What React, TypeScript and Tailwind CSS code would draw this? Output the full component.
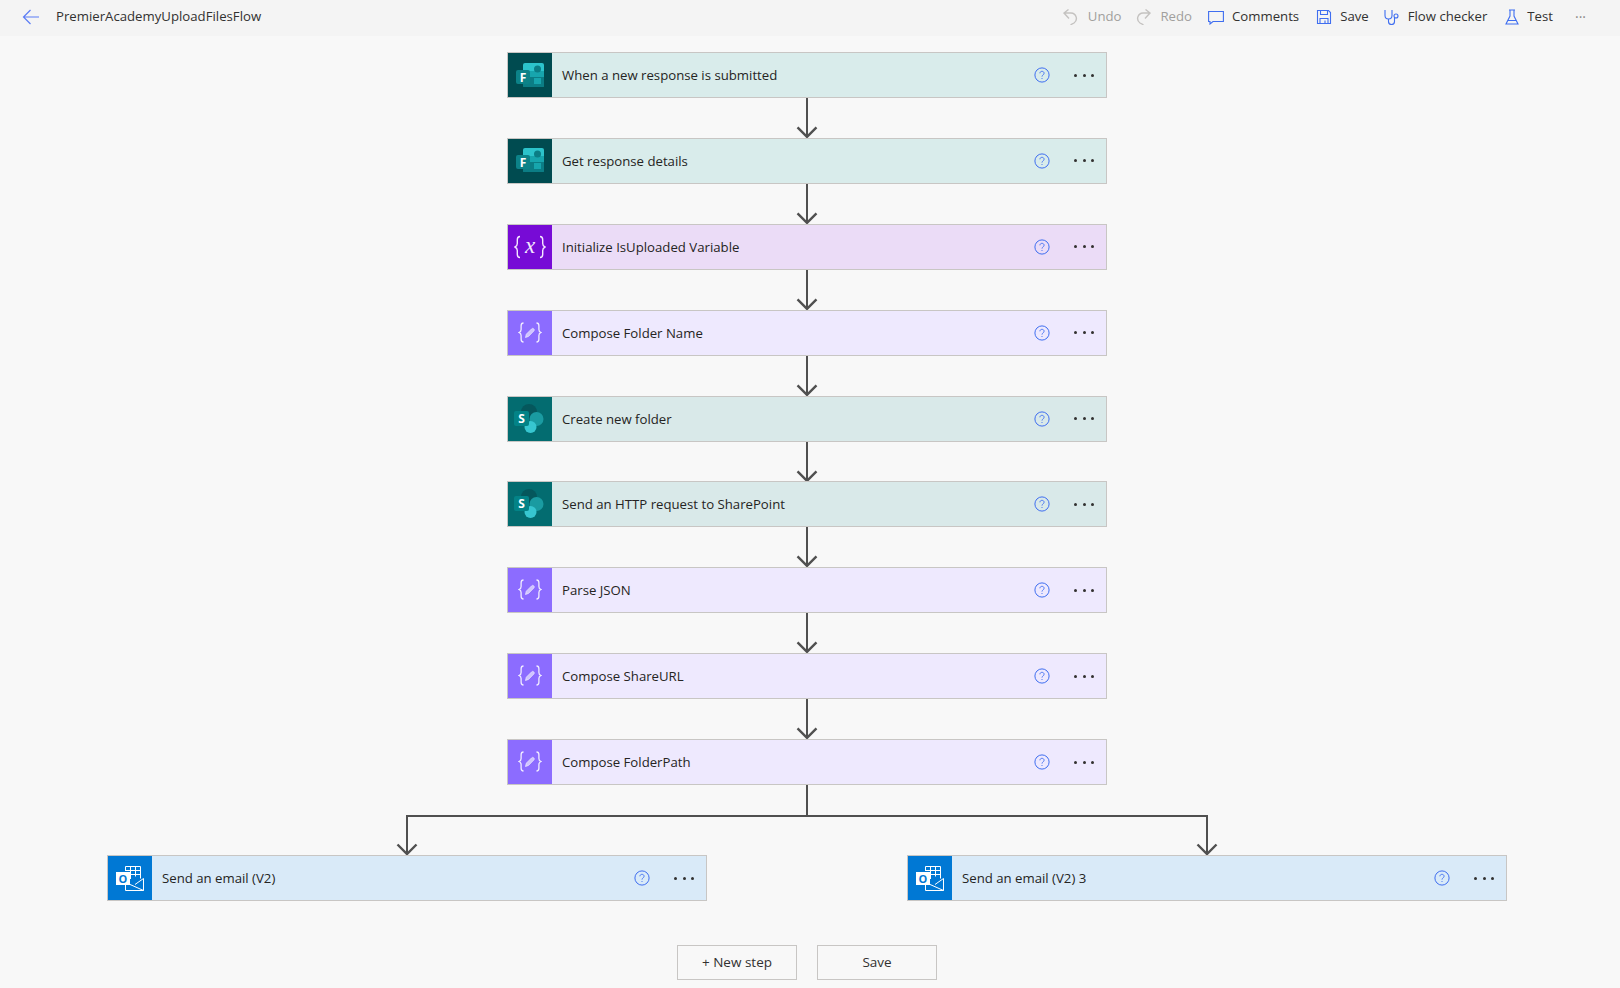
import type { ReactNode } from 'react';

const BLUE = '#3f6ef0';

const FormsIcon = () => (
  <svg width="28" height="25" viewBox="0 0 28 25">
    <rect x="7" y="0" width="21" height="24" rx="2" fill="#2cc3cb" />
    <rect x="7" y="13" width="21" height="11" rx="1" fill="#0b7d85" />
    <rect x="7" y="8" width="21" height="6" fill="#17a5ad" />
    <circle cx="21.500" cy="6" r="3.500" fill="#0b7d85" />
    <rect x="18" y="15" width="7" height="6" fill="#17a5ad" />
    <rect x="0" y="7" width="14" height="14" rx="2" fill="#0c8288" />
    <text x="7" y="18.500" textAnchor="middle" fontSize="12" fontWeight="700" fill="#fff" fontFamily="Open Sans, sans-serif">F</text>
  </svg>
);

const SharePointIcon = () => (
  <svg width="32" height="32" viewBox="0 0 32 32">
    <circle cx="15" cy="9" r="8" fill="#05575c" />
    <circle cx="22.500" cy="16" r="7" fill="#1a9ba1" />
    <circle cx="16.500" cy="24" r="6" fill="#37c6d0" />
    <rect x="0" y="8" width="15" height="15" rx="2" fill="#038387" />
    <text x="7.500" y="20" textAnchor="middle" fontSize="12" fontWeight="700" fill="#fff" fontFamily="Open Sans, sans-serif">S</text>
  </svg>
);

const VariableIcon = () => (
  <svg width="32" height="32" viewBox="0 -4 32 32" fill="none" stroke="#f4e8ff" strokeWidth="1.400">
    <path d="M6 1.500c-2.500 0-2.700 1.200-2.700 3.200v3.800c0 1.800-.7 2.800-2.300 3.500 1.600.7 2.300 1.700 2.300 3.500v3.800c0 2 .2 3.200 2.700 3.200" />
    <path d="M26 1.500c2.500 0 2.700 1.200 2.700 3.200v3.800c0 1.800.7 2.800 2.300 3.500-1.600.7-2.300 1.700-2.300 3.500v3.800c0 2-.2 3.200-2.700 3.200" />
    <text x="16" y="17.500" textAnchor="middle" fontSize="23" fontStyle="italic" fill="#f4e8ff" stroke="none" fontFamily="Liberation Serif, serif">x</text>
  </svg>
);

const ComposeIcon = () => (
  <svg width="24" height="22" viewBox="0 0 24 22" fill="none" stroke="#f0ecff" strokeWidth="1.300">
    <path d="M5.500 1c-2.200 0-2.400 1-2.400 2.800v3.600c0 1.600-.6 2.600-2.100 3.100 1.500.5 2.100 1.500 2.100 3.100v3.600c0 1.800.2 2.800 2.400 2.800" />
    <path d="M18.500 1c2.200 0 2.400 1 2.400 2.800v3.600c0 1.600.6 2.600 2.100 3.100-1.500.5-2.100 1.500-2.100 3.100v3.600c0 1.800-.2 2.800-2.400 2.800" />
    <path d="M7.500 15.500l.8-3.300 5.300-5.300c.7-.7 1.600-.7 2.200 0 .6.600.6 1.500 0 2.100l-5.300 5.400z" fill="#cfc4ff" strokeWidth="0.700" />
  </svg>
);

const OutlookIcon = () => (
  <svg width="28" height="25" viewBox="0 0 28 25" fill="none" stroke="#fff" strokeWidth="1">
    <path d="M9.500 5V.5h15v12M14.500.5v12.500M19.500.5v10M9.500 4.500h15M9.500 8.500h15" />
    <path d="M9.500 18.500v6h18v-12l-8.500 6" />
    <path d="M13 18l14.500 6.500" />
    <rect x="0" y="6" width="14" height="13" fill="#fff" stroke="none" />
    <text x="7" y="16.500" textAnchor="middle" fontSize="11" fontWeight="700" fill="#0078d4" stroke="none" fontFamily="Open Sans, sans-serif">O</text>
  </svg>
);

type Step = { title: string; icon: ReactNode; iconBg: string; bg: string };

const forms = { icon: <FormsIcon />, iconBg: 'bg-[#004b50]', bg: 'bg-[#d9eceb]' };
const sharepoint = { icon: <SharePointIcon />, iconBg: 'bg-[#036c70]', bg: 'bg-[#d9e9e9]' };
const compose = { icon: <ComposeIcon />, iconBg: 'bg-[#8c6cff]', bg: 'bg-[#eee9fe]' };
const outlook = { icon: <OutlookIcon />, iconBg: 'bg-[#0078d4]', bg: 'bg-[#d9eaf8]' };

const steps: Step[] = [
  { title: 'When a new response is submitted', ...forms },
  { title: 'Get response details', ...forms },
  { title: 'Initialize IsUploaded Variable', icon: <VariableIcon />, iconBg: 'bg-[#770bd6]', bg: 'bg-[#ebdcf7]' },
  { title: 'Compose Folder Name', ...compose },
  { title: 'Create new folder', ...sharepoint },
  { title: 'Send an HTTP request to SharePoint', ...sharepoint },
  { title: 'Parse JSON', ...compose },
  { title: 'Compose ShareURL', ...compose },
  { title: 'Compose FolderPath', ...compose },
];

const StepCard = ({ title, icon, iconBg, bg }: Step) => (
  <div className={`flex h-[46px] w-[600px] items-stretch border border-[#c8c6c4] ${bg}`}>
    <div className={`flex w-[44px] shrink-0 items-center justify-center ${iconBg}`}>{icon}</div>
    <div className="flex-1 pl-[10px] text-[13.200px] leading-[44px] text-[#252423]">{title}</div>
    <div className="flex w-[65px] items-center justify-center">
      <svg width="16" height="16" viewBox="0 0 16 16" fill="none" stroke={BLUE}>
        <circle cx="8" cy="8" r="7.100" />
        <path d="M5.900 6.300c0-1.200 1-2 2.100-2s2.100.8 2.100 1.900c0 1.700-2.100 1.700-2.100 3.400" strokeWidth="0.900" />
        <circle cx="8" cy="11.500" r="0.600" fill={BLUE} stroke="none" />
      </svg>
    </div>
    <div className="mr-[12px] flex w-[20px] items-center justify-between">
      <span className="h-[3px] w-[3px] rounded-full bg-[#323130]" />
      <span className="h-[3px] w-[3px] rounded-full bg-[#323130]" />
      <span className="h-[3px] w-[3px] rounded-full bg-[#323130]" />
    </div>
  </div>
);

const Arrow = () => (
  <svg width="22" height="39.875" viewBox="0 0 22 40" fill="none" stroke="#505050" strokeWidth="2" className="block">
    <path d="M11 0v39" />
    <path d="M1.500 29.500L11 39l9.500-9.500" strokeWidth="2.400" />
  </svg>
);

const Branch = () => (
  <svg width="802" height="70" viewBox="0 0 802 70" fill="none" stroke="#505050" strokeWidth="2" className="block overflow-visible">
    <path d="M401 0v31M1 69V31h800v38" />
    <path d="M-8.500 59.500L1 69l9.500-9.500" strokeWidth="2.400" />
    <path d="M791.500 59.500L801 69l9.500-9.500" strokeWidth="2.400" />
  </svg>
);

const BackArrow = () => (
  <svg width="18" height="16" viewBox="0 0 18 16" fill="none" stroke="#5b7cf5" strokeWidth="1.200">
    <path d="M17 8H1.500M8.500 1L1.500 8l7 7" />
  </svg>
);

const toolIcon = { fill: 'none', strokeWidth: 1.1, viewBox: '0 0 16 16', width: 16, height: 16 };

const toolbar = [
  { label: 'Undo', off: true, cls: 'mr-[-2px] gap-[10px]', icon: <svg {...toolIcon} stroke="#c4c2c0" strokeWidth="1.400"><path d="M6.500.5L2 4l5 5.500M2 4h7a5.500 5.500 0 0 1 3 10l-3.500 1.800" /></svg> },
  { label: 'Redo', off: true, cls: 'mr-[-1px] gap-[8px]', icon: <svg {...toolIcon} stroke="#c4c2c0" strokeWidth="1.400"><path d="M9.500.5L14 4 9 9.500M14 4H7a5.500 5.500 0 0 0-3 10l3.500 1.800" /></svg> },
  { label: 'Comments', off: false, cls: 'gap-[8px]', icon: <svg {...toolIcon} stroke={BLUE}><path d="M.6 2.500h14.800v10H5l-3 2.500v-2.500H.6z" /></svg> },
  { label: 'Save', off: false, cls: 'mr-[-2px] gap-[8px]', icon: <svg {...toolIcon} stroke={BLUE}><path d="M1.500 1.500h11l2 2v11h-13zM4.500 1.500v4h7v-4M4 14.500V9.500h8v5M9 11.500v3" /></svg> },
  { label: 'Flow checker', off: false, cls: 'gap-[8px]', icon: <svg {...toolIcon} stroke={BLUE}><path d="M1 1v5.500a3.500 3.500 0 0 0 7 0V1M4.500 10v2.500a3 3 0 0 0 6 0V9" /><circle cx="12" cy="7" r="2" /></svg> },
  { label: 'Test', off: false, cls: 'gap-[7px]', icon: <svg {...toolIcon} stroke={BLUE}><path d="M5 1h6M6 1v6L2 15h12l-4-8V1M4 11.500h8" /></svg> },
];

export default function App() {
  return (
    <div className="min-h-[988px] bg-[#f8f8f8] font-['Open_Sans',sans-serif] text-[#323130]">
      <header className="flex h-[36px] items-center bg-[#f4f4f4] pb-[2px] pl-[22px] pr-[34px] text-[13.200px]">
        <BackArrow />
        <span className="ml-[16px]">PremierAcademyUploadFilesFlow</span>
        <div className="ml-auto flex items-center gap-[17px]">
          {toolbar.map((item) => (
            <div key={item.label} className={`flex items-center ${item.cls} ${item.off ? 'text-[#a19f9d]' : ''}`}>
              {item.icon}
              <span>{item.label}</span>
            </div>
          ))}
          <span className="ml-[5px] text-[14px] leading-none text-[#8a8886]">···</span>
        </div>
      </header>

      <main className="flex w-[1614px] flex-col items-center pt-[16px]">
        {steps.map((step, i) => (
          <div key={step.title} className="flex flex-col items-center">
            <StepCard {...step} />
            {i < steps.length - 1 && <Arrow />}
          </div>
        ))}
        <Branch />
        <div className="flex gap-[200px]">
          <StepCard title="Send an email (V2)" {...outlook} />
          <StepCard title="Send an email (V2) 3" {...outlook} />
        </div>
        <div className="mt-[44px] flex gap-[20px]">
          <button className="h-[35px] w-[120px] border border-[#c8c6c4] text-[13.500px]">+ New step</button>
          <button className="h-[35px] w-[120px] border border-[#c8c6c4] text-[13.500px]">Save</button>
        </div>
      </main>
    </div>
  );
}
